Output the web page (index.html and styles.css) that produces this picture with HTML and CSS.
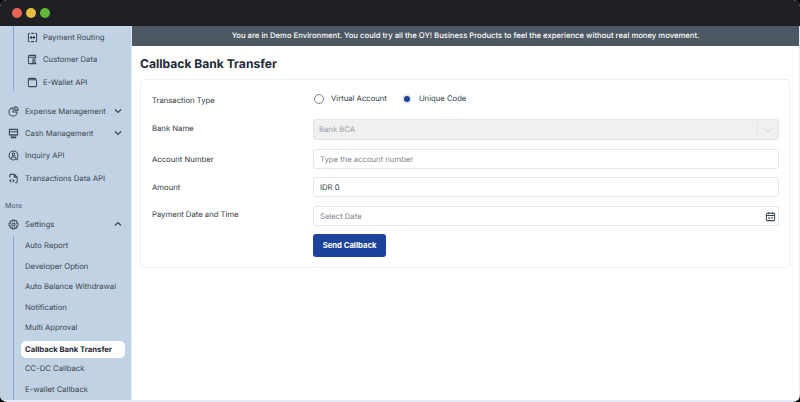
FILE: index.html
```html
<!DOCTYPE html>
<html lang="en">
<head>
    <meta charset="UTF-8">
    <meta name="viewport" content="width=device-width, initial-scale=1.0">
    <title>Callback Bank Transfer</title>
    <link rel="stylesheet" href="styles.css">
</head>
<body>
    <div class="window">
        <div class="titlebar">
            <span class="dot dot-red"></span>
            <span class="dot dot-yellow"></span>
            <span class="dot dot-green"></span>
        </div>
        <div class="app">
            <aside class="sidebar">
                <div class="subgroup subgroup-top">
                    <div class="sub-item">
                        <svg class="icon" viewBox="0 0 12 12"><path d="M3 1.500H2.500a1 1 0 0 0-1 1v7a1 1 0 0 0 1 1H3M9 1.500h.5a1 1 0 0 1 1 1v7a1 1 0 0 1-1 1H9M4.500 1.500h3M4.500 10.500h3M3.500 6h5M5 4.500L3.500 6 5 7.500M7 4.500L8.500 6 7 7.500"/></svg>
                        <span>Payment Routing</span>
                    </div>
                    <div class="sub-item">
                        <svg class="icon" viewBox="0 0 12 12"><path d="M5 10.500H2.500a1 1 0 0 1-1-1v-7a1 1 0 0 1 1-1h6a1 1 0 0 1 1 1V5M1.500 3.500h8"/><circle cx="7.500" cy="6.500" r="1.300"/><path d="M5.300 10.500c.2-1.500 1.100-2 2.200-2s2 .5 2.200 2z"/></svg>
                        <span>Customer Data</span>
                    </div>
                    <div class="sub-item">
                        <svg class="icon" viewBox="0 0 12 12"><path d="M9.500 3V2.500a1 1 0 0 0-1-1h-6a1 1 0 0 0-1 1v7a1 1 0 0 0 1 1h7a1 1 0 0 0 1-1V4a1 1 0 0 0-1-1H1.500M8.300 7.200h.1"/></svg>
                        <span>E-Wallet API</span>
                    </div>
                </div>

                <div class="nav-list">
                    <div class="nav-item">
                        <svg class="icon" viewBox="0 0 12 12"><path d="M5.500 2a4.500 4.500 0 1 0 4.500 4.500H5.500zM7.500.9a3.600 3.600 0 0 1 3.600 3.600H7.500z"/></svg>
                        <span class="nav-label">Expense Management</span>
                        <svg class="chevron" viewBox="0 0 10 10"><path d="M2 3.500L5 6.500 8 3.500"/></svg>
                    </div>
                    <div class="nav-item">
                        <svg class="icon" viewBox="0 0 12 12"><path d="M1.500 1.500h9v6h-9zM1.500 4h9M3.500 7.500v3h5v-3M5 9h2"/></svg>
                        <span class="nav-label">Cash Management</span>
                        <svg class="chevron" viewBox="0 0 10 10"><path d="M2 3.500L5 6.500 8 3.500"/></svg>
                    </div>
                    <div class="nav-item">
                        <svg class="icon" viewBox="0 0 12 12"><circle cx="6" cy="6" r="4.800"/><circle cx="6" cy="4.700" r="1.500"/><path d="M3.300 9.500c.4-1.500 1.400-2.200 2.700-2.200s2.300.7 2.700 2.200M9.500 9.800l1.500 1.200"/></svg>
                        <span class="nav-label">Inquiry API</span>
                    </div>
                    <div class="nav-item">
                        <svg class="icon" viewBox="0 0 12 12"><path d="M2 5V2.500a1 1 0 0 1 1-1h4l3 3v5a1 1 0 0 1-1 1H8M7 1.500v3h3M3.500 7L2 8.500 3.500 10M5 7l1.500 1.500L5 10"/></svg>
                        <span class="nav-label">Transactions Data API</span>
                    </div>
                </div>

                <div class="section-title">More</div>

                <div class="nav-item">
                    <svg class="icon" viewBox="0 0 12 12"><circle cx="6" cy="6" r="1.700"/><path d="M5 1h2l.3 1.400 1.300-.6 1.400 1.400-.7 1.200L10.900 5v2l-1.600.4.700 1.300-1.400 1.400-1.300-.7L7 11H5l-.3-1.600-1.300.7L2 8.700l.7-1.300L1.100 7V5l1.600-.4L2 3.200l1.400-1.400 1.300.6z"/></svg>
                    <span class="nav-label">Settings</span>
                    <svg class="chevron" viewBox="0 0 10 10"><path d="M2 6.500L5 3.500 8 6.500"/></svg>
                </div>

                <div class="subgroup subgroup-settings">
                    <div class="sub-link">Auto Report</div>
                    <div class="sub-link">Developer Option</div>
                    <div class="sub-link">Auto Balance Withdrawal</div>
                    <div class="sub-link">Notification</div>
                    <div class="sub-link">Multi Approval</div>
                    <div class="sub-link sub-link-active">Callback Bank Transfer</div>
                    <div class="sub-link">CC-DC Callback</div>
                    <div class="sub-link">E-wallet Callback</div>
                </div>
            </aside>

            <main class="main">
                <div class="demo-banner">You are in Demo Environment. You could try all the OY! Business Products to feel the experience without real money movement.</div>
                <div class="content">
                    <h1>Callback Bank Transfer</h1>
                    <form class="card">
                        <div class="form-row row-radio">
                            <label class="field-label">Transaction Type</label>
                            <div class="radios">
                                <span class="radio"><span class="radio-circle"></span>Virtual Account</span>
                                <span class="radio"><span class="radio-circle radio-checked"></span>Unique Code</span>
                            </div>
                        </div>
                        <div class="form-row row-select">
                            <label class="field-label field-label-high">Bank Name</label>
                            <div class="select-box">
                                <span class="select-value">Bank BCA</span>
                                <span class="select-sep"></span>
                                <svg class="select-arrow" viewBox="0 0 10 10"><path d="M1.500 3.500L5 7 8.500 3.500"/></svg>
                            </div>
                        </div>
                        <div class="form-row">
                            <label class="field-label">Account Number</label>
                            <div class="input-box placeholder">Type the account number</div>
                        </div>
                        <div class="form-row row-amount">
                            <label class="field-label">Amount</label>
                            <div class="input-box">IDR 0</div>
                        </div>
                        <div class="form-row">
                            <label class="field-label field-label-date">Payment Date and Time</label>
                            <div class="input-box placeholder">
                                Select Date
                                <svg class="calendar" viewBox="0 0 12 12"><path d="M2.500 2.500h7a1 1 0 0 1 1 1v6a1 1 0 0 1-1 1h-7a1 1 0 0 1-1-1v-6a1 1 0 0 1 1-1zM1.500 5h9M4 1v2.500M8 1v2.500M3.500 7.500h2M6.500 7.500h2"/></svg>
                            </div>
                        </div>
                        <div class="form-row row-button">
                            <span class="field-label"></span>
                            <button type="button" class="btn-send">Send Callback</button>
                        </div>
                    </form>
                </div>
            </main>
        </div>
    </div>
</body>
</html>
```

FILE: styles.css
```css
/* General Styles */
html, body {
    margin: 0;
    padding: 0;
    height: 100%;
    background-color: #000;
    overflow: hidden;
}
body {
    font-family: Inter, "Liberation Sans", sans-serif;
    color: #333b45;
    text-rendering: geometricPrecision;
}
.window {
    width: 800px;
    height: 402px;
    border-radius: 7px;
    overflow: hidden;
    display: flex;
    flex-direction: column;
    background-color: #e4eaf6;
}

/* Title bar */
.titlebar {
    height: 26px;
    flex: none;
    background-color: #1e2024;
    display: flex;
    align-items: center;
    gap: 4px;
    padding-left: 12px;
}
.dot {
    width: 10px;
    height: 10px;
    border-radius: 50%;
}
.dot-red { background-color: #ed6358; }
.dot-yellow { background-color: #e5bf3f; }
.dot-green { background-color: #63b83b; }

/* Sidebar */
.app {
    flex: 1;
    display: flex;
    min-height: 0;
    padding: 0 1px 2px 0;
}
.sidebar {
    width: 131px;
    flex: none;
    background-color: #c1d2e4;
    overflow: hidden;
    font-size: 7.700px;
    color: #3c4650;
}
.icon {
    width: 11px;
    height: 11px;
    flex: none;
    fill: none;
    stroke: #3c4650;
    stroke-width: 1.100;
}
.chevron {
    width: 10px;
    height: 10px;
    flex: none;
    margin-left: auto;
    fill: none;
    stroke: #3c4650;
    stroke-width: 1.200;
}
.subgroup {
    margin-left: 13px;
    border-left: 1px solid #8ea6c6;
}
.subgroup-top {
    height: 65px;
    padding-left: 13px;
}
.sub-item {
    height: 22.500px;
    display: flex;
    align-items: center;
    gap: 5px;
}
.nav-list {
    margin-top: 9px;
}
.nav-item {
    height: 22.300px;
    display: flex;
    align-items: center;
    gap: 6px;
    padding: 0 8px;
    white-space: nowrap;
}
.section-title {
    margin: 11px 0 1px;
    height: 12px;
    line-height: 12px;
    padding-left: 5px;
    font-size: 6.900px;
    font-weight: 500;
    color: #5d6a78;
}
.subgroup-settings {
    padding-left: 7px;
    margin-top: 1px;
}
.sub-link {
    height: 20.500px;
    line-height: 20.500px;
    padding-left: 4px;
    width: 100px;
    white-space: nowrap;
}
.sub-link-active {
    height: 17px;
    line-height: 17px;
    margin: 1.700px 0 1.800px;
    background-color: #fff;
    border-radius: 5px;
    font-weight: 700;
    color: #1e2730;
}

/* Main */
.main {
    flex: 1;
    min-width: 0;
    margin-left: 1px;
    background-color: #fff;
    display: flex;
    flex-direction: column;
}
.demo-banner {
    height: 20px;
    line-height: 20px;
    flex: none;
    background-color: #4e5862;
    color: #fff;
    text-align: center;
    font-size: 7.700px;
    font-weight: 500;
}
.content {
    padding: 0 9px 0 8px;
}
h1 {
    margin: 10px 0 0;
    height: 23px;
    line-height: 16px;
    font-size: 12.100px;
    font-weight: 700;
    color: #1e2a35;
}
.card {
    border: 1px solid #eef0f2;
    border-radius: 4px;
    height: 189px;
    box-sizing: border-box;
    padding: 11px 10px 0 11px;
}
.form-row {
    display: flex;
    align-items: center;
    font-size: 7.700px;
    margin-bottom: 8px;
}
.field-label {
    width: 161px;
    flex: none;
    color: #333b45;
}
.field-label-high {
    align-self: flex-start;
    padding-top: 5px;
}
.field-label-date {
    align-self: flex-start;
    padding-top: 4px;
}
.row-radio {
    height: 20px;
    align-items: flex-start;
}
.row-radio .field-label {
    padding-top: 5px;
}
.row-select {
    margin-bottom: 9px;
}
.row-amount {
    margin-bottom: 9px;
}
.radios {
    display: flex;
    gap: 15px;
    margin-top: -1px;
}
.radio {
    display: flex;
    align-items: center;
    gap: 7px;
    color: #333b45;
    height: 17px;
}
.radio-circle {
    width: 10px;
    height: 10px;
    margin-left: 1px;
    box-sizing: border-box;
    border: 1px solid #7a828c;
    border-radius: 50%;
    background-color: #fff;
}
.radio-checked {
    border: none;
    background-color: #1d429b;
    width: 6px;
    height: 6px;
    box-shadow: 0 0 0 2px #e4eaf6;
    margin: 0 2px;
}
.select-box {
    flex: 1;
    height: 21px;
    box-sizing: border-box;
    background-color: #f0f0f0;
    border: 1px solid #e3e3e3;
    border-radius: 3px;
    display: flex;
    align-items: center;
    padding: 0 5px;
    color: #9a9fa5;
}
.select-value {
    flex: 1;
}
.select-sep {
    width: 1px;
    height: 11px;
    background-color: #e2e2e2;
    margin-right: 5px;
}
.select-arrow {
    width: 10px;
    height: 10px;
    fill: none;
    stroke: #cfd1d3;
    stroke-width: 1;
}
.input-box {
    flex: 1;
    height: 20px;
    box-sizing: border-box;
    background-color: #fff;
    border: 1px solid #e4e5e7;
    border-radius: 3px;
    display: flex;
    align-items: center;
    justify-content: space-between;
    padding: 0 2px 0 6px;
    color: #333b45;
}
.placeholder {
    color: #7f858c;
}
.calendar {
    width: 11px;
    height: 11px;
    fill: none;
    stroke: #3c4650;
    stroke-width: 1.100;
}
.btn-send {
    width: 73px;
    height: 23px;
    background-color: #1d429b;
    color: #fff;
    border: none;
    border-radius: 3px;
    padding: 0;
    font-family: inherit;
    font-size: 7.700px;
    font-weight: 700;
}
```
